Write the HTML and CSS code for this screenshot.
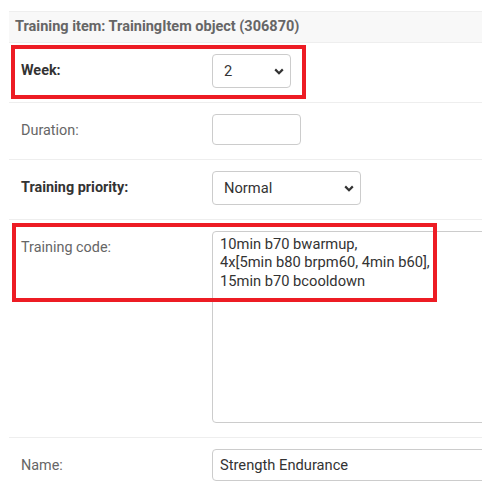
FILE: index.html
```html
<!DOCTYPE html>
<html>
<head>
<meta charset="utf-8">
<link rel="stylesheet" href="styles.css">
</head>
<body>
<div class="module">
  <h2 class="module-title">Training item: TrainingItem object (306870)</h2>
  <div class="form-row">
    <label class="label required">Week:</label>
    <div class="select-wrap week">
      <select class="select"><option>2</option></select>
      <svg class="chev" width="10" height="7" viewBox="0 0 10 7"><path d="M1.2 1.4 L5 5.2 L8.8 1.4" fill="none" stroke="#333" stroke-width="2.2"/></svg>
    </div>
  </div>
  <div class="form-row">
    <label class="label">Duration:</label>
    <input class="input duration" type="text">
  </div>
  <div class="form-row">
    <label class="label required">Training priority:</label>
    <div class="select-wrap priority">
      <select class="select"><option>Normal</option></select>
      <svg class="chev" width="10" height="7" viewBox="0 0 10 7"><path d="M1.2 1.4 L5 5.2 L8.8 1.4" fill="none" stroke="#333" stroke-width="2.2"/></svg>
    </div>
  </div>
  <div class="form-row">
    <label class="label">Training code:</label>
    <textarea class="textarea">10min b70 bwarmup,
4x[5min b80 brpm60, 4min b60],
15min b70 bcooldown</textarea>
  </div>
  <div class="form-row">
    <label class="label">Name:</label>
    <input class="input name" type="text" value="Strength Endurance">
  </div>
  <div class="mark mark-week"></div>
  <div class="mark mark-code"></div>
</div>
</body>
</html>
```
FILE: styles.css
```css
html, body {
  margin: 0;
  padding: 0;
  background: #fff;
  overflow: hidden;
}
body {
  font-family: Roboto, "Liberation Sans", sans-serif;
  font-size: 14px;
  color: #333;
  padding: 11px 0 0 9px;
}
.module {
  position: relative;
  width: 700px;
}
.module-title {
  margin: 0;
  height: 30px;
  box-sizing: content-box;
  border-top: 1px solid #eee;
  border-bottom: 1px solid #eee;
  background: #f8f8f8;
  color: #666;
  font-size: 14.5px;
  font-weight: 700;
  line-height: 30px;
  padding: 0 6px;
}
.form-row {
  display: flex;
  align-items: flex-start;
  padding: 11px 0 14px 12px;
  border-bottom: 1px solid #eee;
}
.label {
  width: 191px;
  flex: none;
  color: #666;
  font-size: 14.4px;
  padding-top: 9px;
  line-height: 16px;
}
.label.required {
  color: #333;
  font-weight: 700;
}
.select-wrap {
  position: relative;
}
.select {
  appearance: none;
  -webkit-appearance: none;
  box-sizing: border-box;
  height: 34px;
  border: 1px solid #ccc;
  border-radius: 4px;
  background: #fff;
  font-family: Roboto, "Liberation Sans", sans-serif;
  font-size: 14.7px;
  color: #333;
  padding: 0 0 0 11px;
  margin: 0;
  display: block;
}
.week .select { width: 79px; }
.priority .select { width: 149px; }
.chev {
  position: absolute;
  right: 7px;
  top: 14px;
  pointer-events: none;
}
.input {
  box-sizing: border-box;
  border: 1px solid #ccc;
  border-radius: 4px;
  font-family: Roboto, "Liberation Sans", sans-serif;
  font-size: 14.7px;
  color: #333;
  padding: 0 0 0 7px;
  margin: 0;
  display: block;
}
.duration { width: 89px; height: 31px; }
.name { width: 400px; height: 32px; }
.textarea {
  box-sizing: border-box;
  width: 400px;
  height: 192px;
  border: 1px solid #ccc;
  border-radius: 4px;
  font-family: Roboto, "Liberation Sans", sans-serif;
  font-size: 14.7px;
  line-height: 18.3px;
  color: #333;
  padding: 3px 7px;
  margin: 0;
  resize: none;
  display: block;
}
.mark {
  position: absolute;
  border: 4px solid #ed1c24;
  box-sizing: border-box;
  pointer-events: none;
}
.mark-week {
  left: 2px;
  top: 34px;
  width: 295px;
  height: 54px;
}
.mark-code {
  left: 3px;
  top: 212px;
  width: 425px;
  height: 79px;
}
```
